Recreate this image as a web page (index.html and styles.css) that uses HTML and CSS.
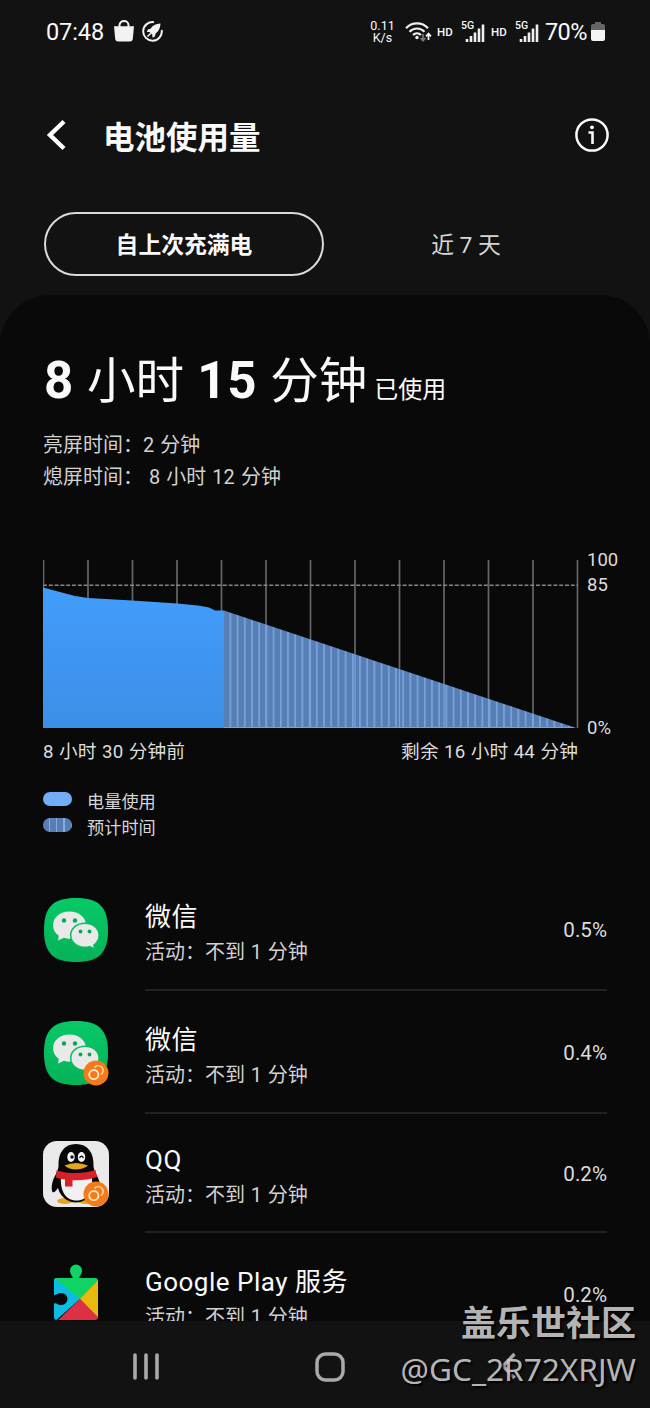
FILE: index.html
```html
<!DOCTYPE html>
<html lang="zh-CN">
<head>
  <meta charset="UTF-8">
  <meta name="viewport" content="width=device-width, initial-scale=1.0">
  <title>电池使用量</title>
  <link rel="stylesheet" href="styles.css">
</head>
<body>
  <!-- 公用图标 -->
  <svg class="defs" width="0" height="0">
    <defs>
      <linearGradient id="green" x1="0" y1="0" x2="0" y2="1">
        <stop offset="0" stop-color="#07c967"/>
        <stop offset="1" stop-color="#06b257"/>
      </linearGradient>
      <symbol id="wechat" viewBox="0 0 64 64">
        <path d="M32 0C55 0 64 9 64 32S55 64 32 64 0 55 0 32 9 0 32 0Z" fill="url(#green)"/>
        <path d="M25.500 13.500C16 13.500 9 19.500 9 27.300c0 4.200 2.200 8 5.800 10.500L14 42.500l6-2.700c1.800.6 3.600.9 5.500.9 9.600 0 16.500-6 16.500-13.600s-7-13.600-16.500-13.600Z" fill="#e9e9e9"/>
        <path d="M41 25.200c-8 0-14.300 5.300-14.300 12S33 49.300 41 49.300c1.700 0 3.300-.2 4.800-.7l5 2.600-1-4.200c3.400-2.300 5.300-5.800 5.300-9.800 0-6.700-6-12-14.100-12Z" fill="#e9e9e9" stroke="#07be60" stroke-width="1.500"/>
        <circle cx="20" cy="22.500" r="2.200" fill="#07a954"/>
        <circle cx="31" cy="22.500" r="2.200" fill="#07a954"/>
        <circle cx="36.500" cy="33.500" r="1.900" fill="#07a954"/>
        <circle cx="45.500" cy="33.500" r="1.900" fill="#07a954"/>
      </symbol>
      <symbol id="dual" viewBox="0 0 26 26">
        <circle cx="13" cy="13" r="12.500" fill="#f67a17"/>
        <circle cx="10.800" cy="14.600" r="4.600" fill="none" stroke="#ffe9c9" stroke-width="1.800"/>
        <path d="M11.500 7.500a4.800 4.800 0 1 1 6.300 7" fill="none" stroke="#ffd9ab" stroke-width="1.400"/>
      </symbol>
      <symbol id="signal" viewBox="0 0 20 18">
        <path d="M2 15v3M6 12v6M10 8.500V18M14 4.500V18M18 .5V18" stroke="#f0f0f0" stroke-width="2.600"/>
      </symbol>
    </defs>
  </svg>

  <div class="phone">
    <div class="status-bar">
      <span class="time">07:48</span>
      <svg class="bag" width="20" height="22" viewBox="0 0 20 22">
        <path d="M5.500 7V5.200C5.500 2.700 7.500 1 10 1s4.500 1.700 4.500 4.200V7" fill="none" stroke="#f2f2f2" stroke-width="2"/>
        <path d="M0 6.300h20l-1.200 12.500Q18.500 21.500 16 21.500H4Q1.500 21.500 1.200 18.800Z" fill="#f2f2f2"/>
      </svg>
      <svg class="rocket" width="21" height="21" viewBox="0 0 21 21">
        <path d="M12 1.200A9.300 9.300 0 1 0 19.700 9" fill="none" stroke="#f2f2f2" stroke-width="2"/>
        <path d="M18.500 2.500c-5 .1-8 2-10 5.200L5.800 8.400l-1 2.500 2.700.1 2.800 2.800.2 2.900 2.400-1.300.7-3c3-2 4.700-5 4.900-9.900Z" fill="#f2f2f2"/>
        <path d="M8.800 12.200 5.500 15.500" stroke="#f2f2f2" stroke-width="1.600"/>
      </svg>
      <span class="space"></span>
      <span class="speed">0.11<br>K/s</span>
      <svg class="wifi" width="27" height="20" viewBox="0 0 27 20">
        <g fill="none" stroke="#f0f0f0" stroke-width="2.200">
          <path d="M1 6.200C7-.2 17-.2 23 6.200"/>
          <path d="M4.500 9.700c4.200-4.300 10.800-4.300 15 0"/>
          <path d="M8 13c2.300-2.200 5.700-2.200 8 0"/>
        </g>
        <circle cx="12" cy="15.500" r="1.700" fill="#f0f0f0"/>
        <path d="M18 12v6M15.500 16l2.500 2.700 2.500-2.700" fill="none" stroke="#777" stroke-width="1.700"/>
        <path d="M23.500 18v-6M21 14.300l2.500-2.700 2.500 2.700" fill="none" stroke="#f0f0f0" stroke-width="1.700"/>
      </svg>
      <span class="hd">HD</span>
      <span class="sim"><small>5G</small><svg width="20" height="18"><use href="#signal"/></svg></span>
      <span class="hd hd2">HD</span>
      <span class="sim"><small>5G</small><svg width="20" height="18"><use href="#signal"/></svg></span>
      <span class="percent">70%</span>
      <svg class="battery" width="14" height="19" viewBox="0 0 14 19">
        <path d="M4 0h6v2h2q2 0 2 2v5H0V4q0-2 2-2h2Z" fill="#666"/>
        <path d="M0 8h14v9q0 2-2 2H2q-2 0-2-2Z" fill="#f4f4f4"/>
      </svg>
    </div>

    <div class="header">
      <svg class="back" width="20" height="32" viewBox="0 0 20 32">
        <path d="M18 2.500 4 16l14 13.500" fill="none" stroke="#fff" stroke-width="4.400"/>
      </svg>
      <h1>电池使用量</h1>
      <svg class="info" width="36" height="36" viewBox="0 0 36 36">
        <circle cx="18" cy="18" r="15.600" fill="none" stroke="#fafafa" stroke-width="2.500"/>
        <circle cx="18" cy="10.300" r="1.900" fill="#fafafa"/>
        <path d="M14.500 15.500h4v11.500" fill="none" stroke="#fafafa" stroke-width="2.600"/>
      </svg>
    </div>

    <div class="tabs">
      <div class="tab active">自上次充满电</div>
      <div class="tab">近 7 天</div>
    </div>

    <div class="panel">
      <div class="total"><b>8</b> 小时 <b>15</b> 分钟 <span>已使用</span></div>
      <p class="screen-time">亮屏时间：2 分钟</p>
      <p class="screen-time">熄屏时间： 8 小时 12 分钟</p>

      <svg class="chart" width="590" height="190" viewBox="0 0 590 190">
        <defs>
          <linearGradient id="used" x1="0" y1="0" x2="0" y2="1">
            <stop offset="0" stop-color="#429dfb"/>
            <stop offset="1" stop-color="#3c8fe6"/>
          </linearGradient>
          <pattern id="stripes" x="186.500" y="0" width="7.200" height="10" patternUnits="userSpaceOnUse">
            <rect width="7.200" height="10" fill="#577fb5"/>
            <rect width="1.700" height="10" fill="#79a2db"/>
          </pattern>
        </defs>
        <path d="M.5 10v168M45 10v168M89.500 10v168M134 10v168M178.500 10v168M223 10v168M267.500 10v168M312 10v168M356.500 10v168M401 10v168M445.500 10v168M490 10v168M534.500 10v168" stroke="#666" stroke-width="1.700"/>
        <path d="M0 35.200h535" stroke="#858585" stroke-width="1.400" stroke-dasharray="4 1.800"/>
        <path d="M0 37.500 15 41.500 32 46 45 48 89 50.500 134 53.500 155 55.500 166 57.500 172 60.500H181V178H0Z" fill="url(#used)"/>
        <path d="M181 60.500 533 178H181Z" fill="url(#stripes)"/>
        <path d="M223 75v103M267.500 90v88M312 104.500v73.500M356.500 119.500V178M401 134v44M445.500 149v29M490 164v14M181 177.500h350" stroke="#7ba4dc" stroke-width="1.200"/>
        <g class="axis">
          <text x="544" y="16">100</text>
          <text x="544" y="41">85</text>
          <text x="544" y="184">0%</text>
        </g>
      </svg>
      <div class="range">
        <span>8 小时 30 分钟前</span>
        <span>剩余 16 小时 44 分钟</span>
      </div>

      <div class="legend"><i class="swatch"></i>电量使用</div>
      <div class="legend"><i class="swatch striped"></i>预计时间</div>

      <div class="apps">
        <div class="app">
          <div class="icon"><svg width="64" height="64"><use href="#wechat"/></svg></div>
          <div class="detail">
            <div class="text">
              <h2>微信</h2>
              <p>活动：不到 1 分钟</p>
            </div>
            <span class="usage">0.5%</span>
          </div>
        </div>
        <div class="app">
          <div class="icon">
            <svg width="64" height="64"><use href="#wechat"/></svg>
            <svg class="badge" width="26" height="26"><use href="#dual"/></svg>
          </div>
          <div class="detail">
            <div class="text">
              <h2>微信</h2>
              <p>活动：不到 1 分钟</p>
            </div>
            <span class="usage">0.4%</span>
          </div>
        </div>
        <div class="app qq">
          <div class="icon">
            <svg width="66" height="66" viewBox="0 0 66 66">
              <rect width="66" height="66" rx="14" fill="#eaeaea"/>
              <ellipse cx="22" cy="60" rx="8" ry="3" fill="#e3a420"/>
              <ellipse cx="43" cy="60" rx="8" ry="3" fill="#e3a420"/>
              <path d="M33 3C21 3 15 12 15.500 25c0 3-1.500 5-2.500 8C10 38 8 44 9 50c1 3 4 0 6-3 2 8 9 14.500 18 14.500S49 55 51 47c2 3 5 6 6 3 1-6-1-12-4-17-1-3-2.500-5-2.500-8C51 12 45 3 33 3Z" fill="#080808"/>
              <path d="M18 36c-1 13 4 23.500 15.500 23.500S50 49 49 36Z" fill="#f1f1f1"/>
              <path d="M13.500 29.500c11 3.500 28 3.500 39-.5l1.500 7c-7 2.500-16 3.500-24.500 3.200V45.500H22V38.500c-3-.5-6-1-9-2Z" fill="#d91f28"/>
              <ellipse cx="28" cy="16" rx="3.700" ry="5" fill="#f4f4f4"/>
              <ellipse cx="38.500" cy="16" rx="3.700" ry="5" fill="#f4f4f4"/>
              <circle cx="29" cy="16" r="1.700" fill="#111"/>
              <path d="M36.500 17q2-3.500 4 0" fill="none" stroke="#111" stroke-width="1.300"/>
              <path d="M21.500 24.500Q33 19.500 45 24.500 40 28.500 33 28.500T21.500 24.500Z" fill="#e5a51f"/>
            </svg>
            <svg class="badge" width="26" height="26"><use href="#dual"/></svg>
          </div>
          <div class="detail">
            <div class="text">
              <h2>QQ</h2>
              <p>活动：不到 1 分钟</p>
            </div>
            <span class="usage">0.2%</span>
          </div>
        </div>
        <div class="app play">
          <div class="icon">
            <svg width="64" height="64" viewBox="0 0 64 64">
              <clipPath id="puzzle">
                <path d="M12 14H28.500C29 12 26 11 26 6.500a6 6 0 0 1 12 0C38 11 35 12 35.500 14H51q3 0 3 3V53q0 3-3 3H13q-3 0-3-3V39.500c2-1 3 1.500 7.500 1.500a6 6 0 0 0 0-12c-4.500 0-5.500 2.500-7.500 2V17q0-3 2-3Z"/>
              </clipPath>
              <g clip-path="url(#puzzle)">
                <path d="M8 0H56V14L36 36 8 14Z" fill="#0fd363"/>
                <path d="M8 12 36 35 9 59Z" fill="#09bde5"/>
                <path d="M56 14 36 35 56 57Z" fill="#e9ba0b"/>
                <path d="M10 60 36 35 58 57V60Z" fill="#dc3045"/>
              </g>
            </svg>
          </div>
          <div class="detail">
            <div class="text">
              <h2>Google Play 服务</h2>
              <p>活动：不到 1 分钟</p>
            </div>
            <span class="usage">0.2%</span>
          </div>
        </div>
      </div>
    </div>

    <div class="nav-bar">
      <svg width="28" height="30" viewBox="0 0 28 30">
        <path d="M3 3v23M14 3v23M25 3v23" stroke="#a9a9a9" stroke-width="3.600" stroke-linecap="round"/>
      </svg>
      <svg width="30" height="30" viewBox="0 0 30 30">
        <rect x="2" y="2" width="26" height="26" rx="8.500" fill="none" stroke="#a9a9a9" stroke-width="3.500"/>
      </svg>
      <svg width="18" height="28" viewBox="0 0 18 28">
        <path d="M15.500 2 4 14l11.500 12" fill="none" stroke="#a9a9a9" stroke-width="3.500"/>
      </svg>
    </div>

    <div class="watermark">
      <strong>盖乐世社区</strong>
      <span>@GC_2R72XRJW</span>
    </div>
  </div>
</body>
</html>
```
FILE: styles.css
```css
* {
  margin: 0;
  padding: 0;
  box-sizing: border-box;
}
body {
  font-family: Roboto, 'Noto Sans CJK SC', sans-serif;
  background-color: #121212;
  color: #fafafa;
}
svg {
  display: block;
  flex: none;
}
.defs {
  position: absolute;
}
.phone {
  position: relative;
  display: flex;
  flex-direction: column;
  width: 650px;
  height: 1408px;
  overflow: hidden;
}

/* 状态栏 */
.status-bar {
  display: flex;
  align-items: center;
  height: 63px;
  padding: 0 45px 0 46px;
  white-space: nowrap;
}
.time {
  width: 68px;
  font-size: 23.5px;
  letter-spacing: -0.1px;
}
.bag {
  margin-bottom: 2px;
}
.rocket {
  margin-left: 8px;
}
.space {
  flex: 1;
}
.speed {
  width: 25px;
  font-size: 12.5px;
  line-height: 11.5px;
  text-align: center;
}
.wifi {
  margin-left: 10px;
}
.hd {
  width: 16px;
  margin-left: 5px;
  font-size: 11.5px;
  font-weight: 500;
}
.hd2 {
  margin-left: 6px;
}
.sim {
  display: flex;
  width: 24px;
  height: 21px;
  margin-left: 8px;
  align-items: flex-end;
}
.sim small {
  align-self: flex-start;
  width: 4px;
  font-size: 10.5px;
  line-height: 10px;
  font-weight: 500;
}
.percent {
  width: 46px;
  margin-left: 6px;
  font-size: 23.5px;
  letter-spacing: -0.6px;
}

/* 标题 */
.header {
  display: flex;
  align-items: center;
  height: 144px;
  padding: 0 40px 0 46px;
}
.back {
  margin-right: 37px;
}
h1 {
  flex: 1;
  padding-top: 7px;
  font-size: 31.5px;
  font-weight: 700;
  line-height: 40px;
}
.tabs {
  display: flex;
  height: 88px;
  padding: 5px 42px 0 44px;
}
.tab {
  flex: 1;
  height: 64px;
  line-height: 67px;
  text-align: center;
  font-size: 22.8px;
  color: #d6d6d6;
}
.tab.active {
  flex: 0 0 280px;
  line-height: 63px;
  border: 2px solid #d9d9d9;
  border-radius: 32px;
  font-weight: 700;
  color: #fafafa;
}

/* 用量面板 */
.panel {
  flex: 1;
  min-height: 0;
  overflow: hidden;
  padding: 53px 43px 0;
  background-color: #090909;
  border-radius: 50px 50px 0 0;
}
.total {
  height: 64px;
  padding-left: 1px;
  line-height: 66px;
  font-size: 48.5px;
  word-spacing: 1px;
  white-space: nowrap;
}
.total b {
  font-size: 51px;
  font-weight: 700;
  letter-spacing: 0.8px;
}
.total span {
  margin-left: -6px;
  font-size: 24px;
}
.screen-time {
  height: 31.5px;
  line-height: 31.5px;
  font-size: 19.9px;
  letter-spacing: 0.1px;
  word-spacing: 1px;
  color: #d2d2d2;
  white-space: pre;
}
.total + .screen-time {
  margin-top: 18px;
}
.chart {
  margin-top: 57px;
}
.axis {
  font-size: 18.5px;
  fill: #dcdcdc;
}
.range {
  display: flex;
  justify-content: space-between;
  width: 535px;
  height: 24px;
  line-height: 24px;
  font-size: 18.7px;
  letter-spacing: 0.1px;
  word-spacing: 0.7px;
  color: #dcdcdc;
}
.legend {
  display: flex;
  align-items: center;
  height: 26.5px;
  font-size: 17.2px;
  color: #d6d6d6;
}
.range + .legend {
  margin-top: 23px;
}
.swatch {
  width: 29px;
  height: 14px;
  margin: 0 15px 3px 0;
  border-radius: 7px;
  background-color: #73adfa;
}
.swatch.striped {
  background: repeating-linear-gradient(90deg, #577fb5 0 6px, #85abe0 6px 7.2px);
}

/* 应用列表 */
.apps {
  margin-top: 28px;
}
.app {
  display: flex;
  height: 123px;
}
.app.qq {
  height: 119px;
}
.icon {
  position: relative;
  width: 102px;
  padding: 30px 0 0 1px;
}
.qq .icon {
  padding: 27px 0 0;
}
.play .icon {
  padding-top: 31px;
}
.badge {
  position: absolute;
  left: 40px;
  top: 69px;
}
.qq .badge {
  top: 67px;
}
.detail {
  display: flex;
  flex: 1;
  justify-content: space-between;
  border-bottom: 2px solid #222;
}
.text {
  padding-top: 31px;
  white-space: nowrap;
}
.qq .text {
  padding-top: 28px;
}
h2 {
  height: 37px;
  line-height: 37px;
  font-size: 26px;
  font-weight: 400;
  letter-spacing: 0.5px;
}
.text p {
  height: 32px;
  line-height: 32px;
  font-size: 20px;
  word-spacing: 0.8px;
  color: #d2d2d2;
}
.usage {
  padding-top: 47px;
  line-height: 30px;
  font-size: 20.6px;
  color: #dcdcdc;
}
.qq .usage {
  padding-top: 45px;
}

/* 导航栏 */
.nav-bar {
  display: flex;
  flex: none;
  justify-content: space-between;
  height: 87px;
  padding: 31px 133px 0 132px;
  background-color: #121212;
}
.watermark {
  position: absolute;
  right: 14px;
  top: 1302px;
  display: flex;
  flex-direction: column;
  align-items: flex-end;
  color: rgba(205, 205, 205, 0.9);
  text-shadow: 2px 2px 2px #000;
  white-space: nowrap;
}
.watermark strong {
  height: 46px;
  line-height: 46px;
  font-size: 35px;
}
.watermark span {
  height: 42px;
  line-height: 42px;
  font-family: 'Noto Sans', sans-serif;
  font-size: 31.6px;
}
```
